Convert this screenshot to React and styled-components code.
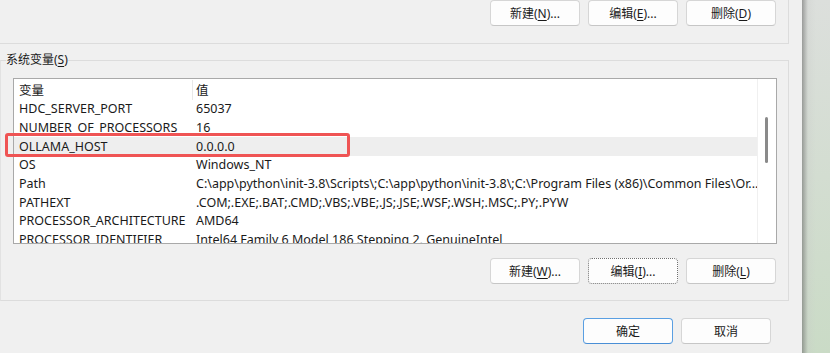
import React from 'react';
import styled, { createGlobalStyle } from 'styled-components';

const GlobalStyle = createGlobalStyle`
  html, body {
    margin: 0;
    padding: 0;
    background: #f0f0f0;
  }
  body {
    font-family: "Segoe UI", "Noto Sans", "Noto Sans CJK SC", sans-serif;
    font-size: 12px;
    color: #1a1a1a;
  }
`

const Page = styled.div`
  position: relative;
  display: flex;
  width: 830px;
  height: 353px;
  overflow: hidden;
`

const Dialog = styled.div`
  width: 802px;
  flex: none;
  display: flex;
  flex-direction: column;
  background: #f0f0f0;
`

const DesktopEdge = styled.div`
  flex: 1;
  background:
    linear-gradient(90deg, rgba(110, 110, 110, 0.6) 0, rgba(200, 200, 200, 0.25) 6px, rgba(255, 255, 255, 0) 14px),
    linear-gradient(180deg, #dcdfdc 0%, #d3ddd1 50%, #cadbc6 100%);
`

const UserPanel = styled.div`
  box-sizing: border-box;
  width: 789px;
  height: 44px;
  border-right: 1px solid #dcdcdc;
  border-bottom: 1px solid #dcdcdc;
  display: flex;
  justify-content: flex-end;
  align-items: flex-start;
  gap: 8px;
  padding-right: 12px;
`

const Group = styled.fieldset`
  box-sizing: border-box;
  width: 789px;
  margin: 8px 0 0 0;
  padding: 10px 12px 16px 12px;
  border: 1px solid #dcdcdc;
  border-left-color: #e2e2e2;
  min-inline-size: 0;
`

const Legend = styled.legend`
  padding: 0;
  margin-left: -7px;
  line-height: 16px;
  font-size: 12px;
  color: #1a1a1a;
`

const Key = styled.span`
  text-decoration: underline;
  text-underline-offset: 2px;
`

const ListBox = styled.div`
  box-sizing: border-box;
  width: 764px;
  height: 166px;
  border: 1px solid #a9a9a9;
  background: #ffffff;
  display: flex;
  overflow: hidden;
`

const Rows = styled.div`
  width: 744px;
  flex: none;
  padding-top: 1px;
  border-right: 1px solid #f0f0f0;
  box-sizing: border-box;
`

const Row = styled.div`
  display: grid;
  grid-template-columns: 179px 1fr;
  height: ${p => (p.$header ? '19.5px' : '18.7px')};
  align-items: center;
  background: ${p => (p.$selected ? '#eeeeee' : 'transparent')};
  font-size: 12.5px;
  white-space: nowrap;
`

const NameCell = styled.div`
  padding-left: 5px;
  height: 100%;
  display: flex;
  align-items: center;
  box-sizing: border-box;
  border-right: 1px solid ${p => (p.$header ? '#e8e8e8' : 'transparent')};
  overflow: hidden;
`

const ValueCell = styled.div`
  padding-left: 3px;
  overflow: hidden;
`

const ScrollTrack = styled.div`
  flex: 1;
  position: relative;
  background: #ffffff;
`

const Thumb = styled.div`
  position: absolute;
  left: 7px;
  top: 38px;
  width: 3px;
  height: 46px;
  border-radius: 2px;
  background: #8a8a8a;
`

const ButtonRow = styled.div`
  display: flex;
  justify-content: flex-end;
  gap: 8px;
  margin-top: ${p => p.$top || '0px'};
  padding-right: ${p => p.$right || '0px'};
`

const Button = styled.button`
  box-sizing: border-box;
  width: 90px;
  height: 26px;
  padding: 0;
  font-family: inherit;
  font-size: 12px;
  color: #1a1a1a;
  background: #fdfdfd;
  border-radius: 4px;
  border: 1px ${p => (p.$focused ? 'dotted' : 'solid')} ${p => (p.$primary ? '#5a9fe2' : p.$focused ? '#6f6f6f' : '#d6d6d6')};
  border-bottom-color: ${p => (p.$primary ? '#4a8fd6' : p.$focused ? '#6f6f6f' : '#c6c6c6')};
`

const Highlight = styled.div`
  position: absolute;
  left: 5px;
  top: 133px;
  width: 345px;
  height: 24px;
  box-sizing: border-box;
  border: 3px solid #ef5454;
  border-radius: 3px;
`

const variables = [
  ['HDC_SERVER_PORT', '65037'],
  ['NUMBER_OF_PROCESSORS', '16'],
  ['OLLAMA_HOST', '0.0.0.0', true],
  ['OS', 'Windows_NT'],
  ['Path', 'C:\\app\\python\\init-3.8\\Scripts\\;C:\\app\\python\\init-3.8\\;C:\\Program Files (x86)\\Common Files\\Or...'],
  ['PATHEXT', '.COM;.EXE;.BAT;.CMD;.VBS;.VBE;.JS;.JSE;.WSF;.WSH;.MSC;.PY;.PYW'],
  ['PROCESSOR_ARCHITECTURE', 'AMD64'],
  ['PROCESSOR_IDENTIFIER', 'Intel64 Family 6 Model 186 Stepping 2, GenuineIntel'],
]

export default function App() {
  return (
    <Page>
      <GlobalStyle />
      <Dialog>
        <UserPanel>
          <Button>新建(<Key>N</Key>)...</Button>
          <Button>编辑(<Key>E</Key>)...</Button>
          <Button>删除(<Key>D</Key>)</Button>
        </UserPanel>

        <Group>
          <Legend>系统变量(<Key>S</Key>)</Legend>
          <ListBox>
            <Rows>
              <Row $header>
                <NameCell $header>变量</NameCell>
                <ValueCell>值</ValueCell>
              </Row>
              {variables.map(([name, value, selected]) => (
                <Row key={name} $selected={selected}>
                  <NameCell>{name}</NameCell>
                  <ValueCell>{value}</ValueCell>
                </Row>
              ))}
            </Rows>
            <ScrollTrack>
              <Thumb />
            </ScrollTrack>
          </ListBox>
          <ButtonRow $top="14px">
            <Button>新建(<Key>W</Key>)...</Button>
            <Button $focused>编辑(<Key>I</Key>)...</Button>
            <Button>删除(<Key>L</Key>)</Button>
          </ButtonRow>
        </Group>

        <ButtonRow $top="17px" $right="31px">
          <Button $primary>确定</Button>
          <Button>取消</Button>
        </ButtonRow>
      </Dialog>
      <DesktopEdge />
      <Highlight />
    </Page>
  );
}
